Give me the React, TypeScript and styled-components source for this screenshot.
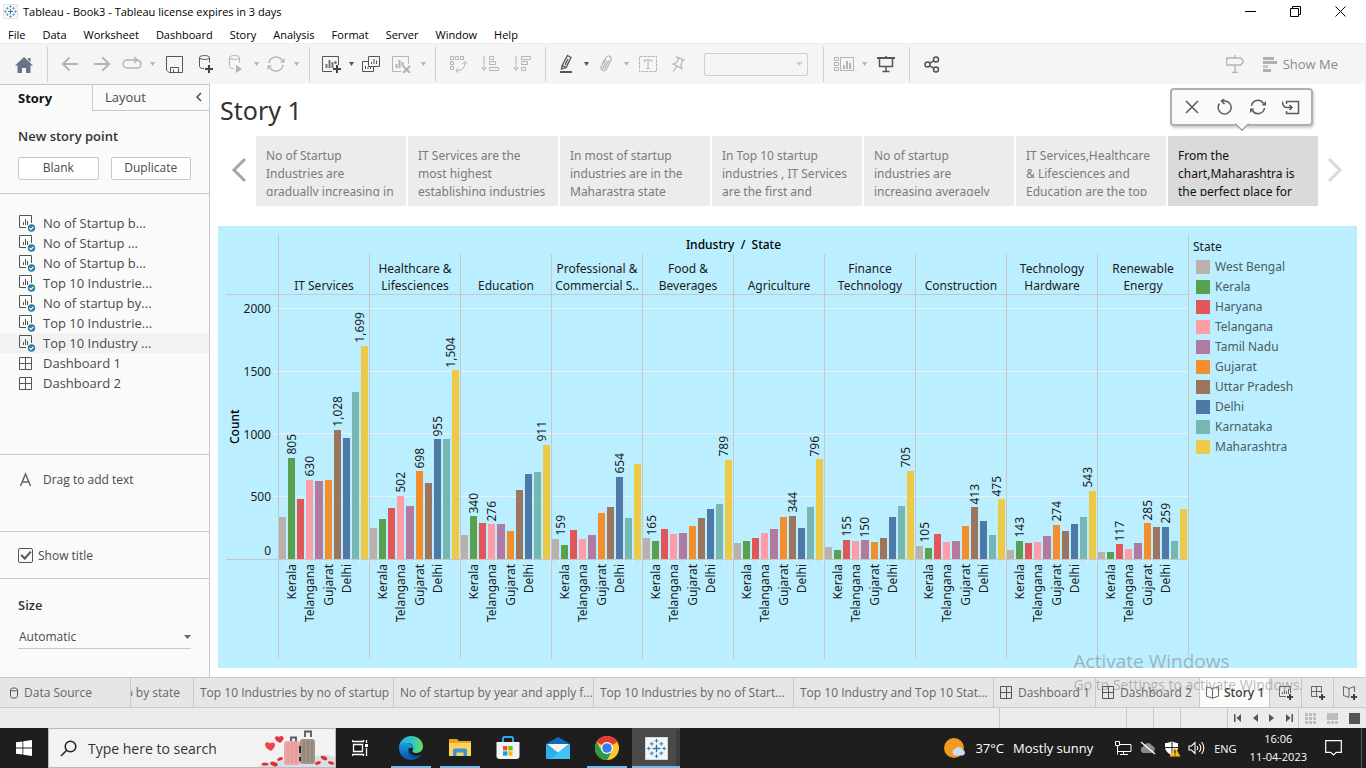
import React from 'react';
import styled, { createGlobalStyle, css } from 'styled-components';

const UI = '"Open Sans", "Noto Sans", sans-serif';
const VIZ = '"Noto Sans", "Open Sans", sans-serif';
const LINE = '#c8c8c8';

const Global = createGlobalStyle`
  * { box-sizing: border-box; }
  body { margin: 0; background: #fff; font-family: ${UI}; font-size: 12px; color: #4a4a4a; }
  button, select, input { font: inherit; color: inherit; margin: 0; }
  button { background: none; border: 0; padding: 0; display: inline-flex; align-items: center; justify-content: center; }
  ul { list-style: none; margin: 0; padding: 0; }
  svg { display: block; flex: none; }
`;

/* ---------- data ---------- */

const states = [
  { name: 'West Bengal', color: '#bab0ac' },
  { name: 'Kerala', color: '#59a14f' },
  { name: 'Haryana', color: '#e15759' },
  { name: 'Telangana', color: '#ff9da7' },
  { name: 'Tamil Nadu', color: '#b07aa1' },
  { name: 'Gujarat', color: '#f28e2b' },
  { name: 'Uttar Pradesh', color: '#9c755f' },
  { name: 'Delhi', color: '#4e79a7' },
  { name: 'Karnataka', color: '#76b7b2' },
  { name: 'Maharashtra', color: '#edc948' },
];

const axisStates = ['Kerala', 'Telangana', 'Gujarat', 'Delhi'];
const SCALE_MAX = 2105;

const industries: { name: string; values: number[]; labelled: number[] }[] = [
  { name: 'IT Services', values: [335, 805, 479, 630, 622, 630, 1028, 965, 1332, 1699], labelled: [1, 3, 6, 9] },
  { name: 'Healthcare & Lifesciences', values: [247, 319, 407, 502, 423, 698, 606, 955, 955, 1504], labelled: [3, 5, 7, 9] },
  { name: 'Education', values: [191, 340, 287, 276, 279, 223, 550, 678, 694, 911], labelled: [1, 3, 9] },
  { name: 'Professional & Commercial S..', values: [159, 112, 231, 159, 191, 367, 415, 654, 327, 758], labelled: [0, 7] },
  { name: 'Food & Beverages', values: [165, 143, 239, 199, 207, 263, 327, 399, 439, 789], labelled: [0, 9] },
  { name: 'Agriculture', values: [128, 143, 167, 207, 239, 335, 344, 247, 415, 796], labelled: [6, 9] },
  { name: 'Finance Technology', values: [96, 72, 155, 145, 150, 136, 167, 335, 423, 705], labelled: [2, 4, 9] },
  { name: 'Construction', values: [105, 88, 199, 136, 143, 263, 413, 303, 191, 475], labelled: [0, 6, 9] },
  { name: 'Technology Hardware', values: [72, 143, 128, 136, 183, 274, 223, 279, 335, 543], labelled: [1, 5, 9] },
  { name: 'Renewable Energy', values: [56, 56, 117, 80, 128, 285, 255, 259, 143, 399], labelled: [2, 5, 7] },
];

const storyPoints = [
  'No of Startup Industries are gradually increasing in',
  'IT Services are the most highest establishing industries',
  'In most of startup industries are in the Maharastra state',
  'In Top 10 startup industries , IT Services are the first and',
  'No of startup industries are increasing averagely',
  'IT Services,Healthcare & Lifesciences and Education are the top',
  'From the chart,Maharashtra is the perfect place for',
];

/* ---------- window chrome ---------- */

const Page = styled.div`
  position: relative;
  min-height: 100vh;
  display: flex;
  flex-direction: column;
  overflow: hidden;
`;

const TitleBar = styled.header`
  height: 23px;
  display: flex;
  align-items: center;
  gap: 5px;
  padding: 0 20px 0 3px;
  font-size: 11px;
  color: #000;
`;

const WindowButtons = styled.div`
  margin-left: auto;
  display: flex;
  gap: 34px;
`;

const MenuBar = styled.nav`
  height: 20px;
  display: flex;
  align-items: center;
  gap: 17px;
  padding: 2px 8px 0;
  font-size: 11px;
  color: #000;
`;

const Toolbar = styled.div`
  height: 41px;
  display: flex;
  align-items: center;
  background: #f5f5f5;
  border-top: 1px solid #ececec;
  color: #b4b4b4;
`;

const ToolGroup = styled.div<{ $pad?: string; $last?: boolean }>`
  height: 35px;
  display: flex;
  align-items: center;
  padding: ${p => p.$pad ?? '0 7px 0 6px'};
  border-right: ${p => (p.$last ? '0' : '1px solid #cfcfcf')};
`;

const Tool = styled.button<{ $w?: number; $on?: boolean }>`
  width: ${p => p.$w ?? 32}px;
  height: 32px;
  color: ${p => (p.$on ? '#555' : '#b4b4b4')};
`;

const FitBox = styled.label`
  display: grid;
  align-items: center;
  width: 104px;
  height: 23px;
  margin-left: 12px;
  margin-right: 8px;
  color: #cfcfcf;
  > * { grid-area: 1 / 1; }
  svg { justify-self: end; margin-right: 5px; pointer-events: none; }
`;

const FitSelect = styled.select`
  appearance: none;
  width: 100%;
  height: 23px;
  border: 1px solid #cfcfcf;
  border-radius: 2px;
  background: #f5f5f5;
`;

const ToolbarEnd = styled.div`
  margin-left: auto;
  padding-right: 28px;
  display: flex;
  align-items: center;
  gap: 12px;
`;

const ShowMe = styled.button`
  gap: 6px;
  font-size: 13px;
  color: #8a8a8a;
`;

/* ---------- workspace ---------- */

const Workspace = styled.div`
  flex: 1;
  display: flex;
`;

const Sidebar = styled.aside`
  width: 210px;
  flex: none;
  display: flex;
  flex-direction: column;
  background: #fafafa;
  border-right: 1px solid ${LINE};
  border-top: 1px solid ${LINE};
`;

const SideTabs = styled.div`
  display: flex;
  height: 26px;
`;

const SideTab = styled.button<{ $active?: boolean }>`
  font-size: 13px;
  line-height: 25px;
  padding: 0;
  ${p =>
    p.$active
      ? css`
          width: 92px;
          justify-content: flex-start;
          padding-left: 18px;
          font-weight: 700;
          color: #111;
        `
      : css`
          flex: 1;
          justify-content: flex-start;
          padding-left: 12px;
          border-left: 1px solid ${LINE};
          border-bottom: 1px solid ${LINE};
        `}
`;

const Collapse = styled.button`
  width: 20px;
  padding-bottom: 2px;
  border-bottom: 1px solid ${LINE};
`;

const Section = styled.section<{ $h: number }>`
  height: ${p => p.$h}px;
  border-bottom: 1px solid ${LINE};
  flex: none;
`;

const SideHeading = styled.h2`
  margin: 0;
  font-size: 13px;
  line-height: 18px;
  font-weight: 600;
  color: #333;
`;

const NewPoint = styled(Section)`
  padding: 16px 18px 0;
`;

const PointButtons = styled.div`
  display: flex;
  gap: 12px;
  margin-top: 12px;
`;

const PointButton = styled.button`
  flex: 1;
  height: 23px;
  padding-bottom: 2px;
  background: #fff;
  border: 1px solid ${LINE};
  border-radius: 2px;
`;

const SheetList = styled.ul`
  padding-top: 19px;
`;

const SheetItem = styled.li<{ $active?: boolean }>`
  height: 20px;
  display: flex;
  align-items: center;
  gap: 7px;
  padding-left: 18px;
  font-size: 13px;
  background: ${p => (p.$active ? '#f2f2f2' : 'transparent')};
`;

const DragText = styled(Section)`
  display: flex;
  align-items: flex-start;
  gap: 11px;
  padding: 16px 19px;
  line-height: 18px;
`;

const TitleToggle = styled(Section)`
  display: flex;
  align-items: center;
`;

const CheckLabel = styled.label`
  display: flex;
  align-items: center;
  gap: 5px;
  padding-left: 18px;
`;

const CheckBox = styled.input`
  appearance: none;
  width: 15px;
  height: 15px;
  border: 1px solid #555;
  border-radius: 2px;
  display: grid;
  place-items: center;
  &:checked::after {
    content: '';
    width: 4px;
    height: 8px;
    margin-bottom: 2px;
    border: solid #555;
    border-width: 0 2px 2px 0;
    transform: rotate(42deg);
  }
`;

const SizeBlock = styled.div`
  padding: 17px 18px 0;
`;

const SizeField = styled.label`
  display: grid;
  align-items: center;
  margin-top: 11px;
  border-bottom: 1px solid ${LINE};
  > * { grid-area: 1 / 1; }
  svg { justify-self: end; pointer-events: none; color: #666; }
`;

const SizeSelect = styled.select`
  appearance: none;
  border: 0;
  background: transparent;
  width: 100%;
  height: 23px;
  padding: 0 1px;
`;

/* ---------- story ---------- */

const StoryView = styled.main`
  position: relative;
  flex: 1;
  min-width: 0;
  display: flex;
  flex-direction: column;
  padding: 0 8px 9px;
  border-right: 1px solid #ededed;
  font-family: ${VIZ};
`;

const StoryTitle = styled.h1`
  margin: 0;
  padding-left: 2px;
  font-size: 25px;
  font-weight: 400;
  line-height: 52px;
  color: #333;
`;

const Navigator = styled.div`
  display: flex;
  align-items: stretch;
  padding: 0 5px 0 4px;
`;

const NavArrow = styled.button<{ $off?: boolean }>`
  width: 34px;
  flex: none;
  padding-bottom: 2px;
  color: ${p => (p.$off ? '#d9d9d9' : '#a6a6a6')};
`;

const Points = styled.div`
  flex: 1;
  display: flex;
  gap: 2px;
`;

const Point = styled.button<{ $active?: boolean }>`
  flex: 1 1 0;
  min-width: 0;
  height: 70px;
  padding: 11px 10px 10px;
  display: block;
  text-align: left;
  font-size: 12px;
  line-height: 18px;
  background: ${p => (p.$active ? '#dadada' : '#ececec')};
  color: ${p => (p.$active ? '#111' : '#7b7b7b')};
  span { display: block; height: 49px; overflow: hidden; }
`;

const PointTools = styled.div`
  position: absolute;
  top: 4px;
  right: 52px;
  width: 143px;
  height: 38px;
  display: flex;
  align-items: center;
  justify-content: center;
  border: 2px solid #b0b0b0;
  border-radius: 4px;
  background: #fafafa;
  box-shadow: 1px 2px 3px rgba(0, 0, 0, 0.2);
  color: #5c5c5c;
  &::after {
    content: '';
    position: absolute;
    top: 29px;
    left: 65px;
    width: 9px;
    height: 9px;
    background: #fafafa;
    border: solid #8a8a8a;
    border-width: 0 1px 1px 0;
    transform: rotate(45deg);
  }
`;

const PointTool = styled.button`
  width: 33px;
  height: 30px;
`;

/* ---------- chart ---------- */

const GRID = '#c9c6c6';

const VizPanel = styled.div`
  flex: 1;
  display: flex;
  margin-top: 20px;
  padding: 8px 0 9px 8px;
  background: #bbefff;
  color: #1b1b1b;
`;

const Chart = styled.div`
  flex: 1;
  min-width: 0;
  display: flex;
  flex-direction: column;
`;

const ChartRow = styled.div<{ $h?: number; $rule?: boolean }>`
  display: flex;
  ${p => (p.$h ? css`height: ${p.$h}px; flex: none;` : css`flex: 1;`)}
  border-bottom: ${p => (p.$rule ? `1px solid ${GRID}` : '0')};
`;

const AxisCell = styled.div`
  width: 52px;
  flex: none;
  display: flex;
`;

const FieldTitle = styled.div`
  flex: 1;
  padding-top: 1px;
  text-align: center;
  font-size: 12px;
  font-weight: 500;
  line-height: 20px;
  color: #000;
  border: solid ${GRID};
  border-width: 0 1px;
`;

const Panes = styled.div`
  flex: 1;
  display: grid;
  grid-template-columns: repeat(10, minmax(0, 1fr));
  border-right: 1px solid ${GRID};
`;

const HeaderCell = styled.div`
  display: flex;
  align-items: flex-end;
  justify-content: center;
  text-align: center;
  border-left: 1px solid ${GRID};
  font-size: 12px;
  line-height: 17px;
`;

const PlotArea = styled.div`
  flex: 1;
  display: grid;
  > * { grid-area: 1 / 1; }
`;

const Scale = styled.div`
  flex: 1;
  display: flex;
  flex-direction: column;
`;

const ScaleGap = styled.div`
  flex: ${SCALE_MAX - 2000} 0 0;
`;

const ScaleStep = styled.div<{ $line?: boolean }>`
  flex: 500 0 0;
  display: flex;
  flex-direction: column;
  justify-content: space-between;
  border-top: ${p => (p.$line ? '1px solid #e9f1f4' : '0')};
`;

const TickRow = styled.div`
  display: flex;
  justify-content: flex-end;
  gap: 2px;
`;

const TickLabel = styled.span<{ $zero?: boolean }>`
  margin-top: ${p => (p.$zero ? 0 : -7)}px;
  padding-right: ${p => (p.$zero ? 7 : 0)}px;
  text-align: right;
  font-size: 12px;
  line-height: 16px;
`;

const Tick = styled.span`
  width: 5px;
  height: 1px;
  background: #e9f1f4;
`;

const AxisTitle = styled.div`
  width: 17px;
  writing-mode: vertical-rl;
  transform: rotate(180deg);
  text-align: center;
  line-height: 17px;
  font-size: 12px;
  font-weight: 500;
  color: #000;
`;

const Pane = styled.div`
  border-left: 1px solid ${GRID};
  display: grid;
`;

const Slots = styled.div`
  margin-left: -1px;
  display: grid;
  grid-template-columns: repeat(10, minmax(0, 1fr));
`;

const Slot = styled.div`
  padding: 0 1px;
  display: flex;
  flex-direction: column;
  justify-content: flex-end;
  align-items: center;
`;

const Bar = styled.div`
  width: 100%;
  flex: none;
`;

const Upright = styled.span`
  writing-mode: vertical-rl;
  transform: rotate(180deg);
  width: 17px;
  line-height: 17px;
  font-size: 12px;
  flex: none;
  white-space: nowrap;
`;

const ValueLabel = styled(Upright)<{ $edge: 'start' | 'end' | 'none' }>`
  margin-bottom: 3px;
  margin-left: ${p => (p.$edge === 'start' ? 9 : 0)}px;
  margin-right: ${p => (p.$edge === 'end' ? 9 : 0)}px;
`;

const AxisSlot = styled.div`
  display: flex;
  flex-direction: column;
  align-items: center;
  gap: 1px;
`;

const SlotTick = styled.i`
  align-self: flex-end;
  width: 1px;
  height: 3px;
  background: #e9f1f4;
`;

const Legend = styled.div`
  width: 168px;
  padding: 3px 0 0 4px;
  font-size: 12px;
  line-height: 20px;
`;

const LegendItem = styled.li`
  display: flex;
  align-items: center;
  gap: 5px;
  padding-left: 3px;
  color: #4d5b60;
`;

const Swatch = styled.span<{ $c: string }>`
  width: 14px;
  height: 14px;
  background: ${p => p.$c};
`;

/* ---------- bottom bars ---------- */

const TabStrip = styled.nav`
  height: 31px;
  display: flex;
  background: #e6e6e6;
  border: solid ${LINE};
  border-width: 1px 0;
  color: #666;
`;

const SheetTab = styled.button<{ $w: number; $active?: boolean; $clip?: boolean; $grow?: boolean }>`
  flex: ${p => (p.$grow ? '1 1' : '0 0')} ${p => p.$w}px;
  min-width: 0;
  gap: 5px;
  padding: 0 5px 0 6px;
  justify-content: ${p => (p.$clip ? 'flex-end' : 'flex-start')};
  overflow: hidden;
  white-space: nowrap;
  border-right: 1px solid ${LINE};
  ${p => p.$clip && css`padding: 0 13px 0 0;`}
  ${p => p.$active && css`background: #fbfbfb; font-weight: 600; color: #444;`}
`;

const NewTab = styled.button`
  width: 32px;
  flex: none;
  border-right: 1px solid ${LINE};
  &:last-child { border-right: 0; }
`;

const StatusBar = styled.div`
  height: 20px;
  display: flex;
  justify-content: flex-end;
  background: #ebebeb;
  color: #555;
`;

const StatusCell = styled.div<{ $w: number }>`
  width: ${p => p.$w}px;
  display: flex;
  align-items: center;
  justify-content: space-around;
  border-left: 1px solid ${LINE};
`;

const Taskbar = styled.footer`
  height: 40px;
  display: flex;
  background: #1e1e1e;
  color: #fff;
`;

const TaskButton = styled.button<{ $w: number; $open?: boolean; $active?: boolean }>`
  width: ${p => p.$w}px;
  flex: none;
  border-bottom: 2px solid ${p => (p.$open ? '#76b9ed' : 'transparent')};
  border-top: 2px solid transparent;
  ${p =>
    p.$active &&
    css`
      background: #4a4a4a;
      border-top-color: #4a4a4a;
      box-shadow: inset -4px 0 #3c3c3c;
    `}
`;

const SearchBox = styled.label`
  width: 288px;
  display: flex;
  align-items: center;
  gap: 11px;
  padding-left: 11px;
  background: #f2f2f2;
  border: 1px solid #b9b9b9;
  color: #222;
`;

const SearchInput = styled.input`
  flex: 1;
  min-width: 0;
  border: 0;
  padding: 0;
  background: transparent;
  font-size: 14px;
  &::placeholder { color: #333; opacity: 1; }
`;

const TaskGap = styled.div<{ $w: number }>`
  width: ${p => p.$w}px;
`;

const Tray = styled.div`
  margin-left: auto;
  display: flex;
  align-items: center;
`;

const Weather = styled.button`
  gap: 9px;
  font-size: 13px;
  color: #fff;
  margin-right: 22px;
`;

const TrayIcons = styled.div`
  display: flex;
  align-items: center;
  gap: 7px;
  margin-right: 9px;
`;

const Language = styled.span`
  font-size: 11px;
  margin-right: 13px;
`;

const Clock = styled.div`
  font-size: 11px;
  line-height: 18px;
  text-align: center;
  margin-right: 18px;
`;

const Notice = styled.button`
  margin-right: 19px;
`;

const ShowDesktop = styled.button`
  width: 5px;
  height: 40px;
  border-left: 1px solid #5a5a5a;
`;

const Watermark = styled.div`
  position: absolute;
  right: 63px;
  bottom: 73px;
  color: rgba(120, 120, 120, 0.5);
  pointer-events: none;
  p { margin: 0; font-size: 14px; line-height: 20px; }
  p:first-child { font-size: 19px; line-height: 27px; }
`;

/* ---------- icons ---------- */

type IconProps = { w?: number; h?: number; sw?: number; children: React.ReactNode };
const Icon = ({ w = 18, h = 18, sw = 1, children }: IconProps) => (
  <svg width={w} height={h} viewBox={`0 0 ${w} ${h}`} fill="none" stroke="currentColor" strokeWidth={sw} aria-hidden="true">
    {children}
  </svg>
);

const Caret = ({ s = 5 }: { s?: number }) => (
  <svg width={s} height="4" viewBox="0 0 5 4" preserveAspectRatio="none" aria-hidden="true">
    <path d="M0 0h5L2.5 4z" fill="currentColor" />
  </svg>
);

const TableauMark = ({ size = 16 }: { size?: number }) => (
  <svg width={size} height={size} viewBox="0 0 24 24" aria-hidden="true">
    <rect x=".5" y=".5" width="23" height="23" fill="#f4f6f8" stroke="#d5d9dc" />
    <g stroke="#2f78a6" strokeWidth="1.5">
      <path d="M12 8v8M8 12h8" />
      <path d="M7 5v4M5 7h4M17 5v4M15 7h4M7 15v4M5 17h4M17 15v4M15 17h4" stroke="#5d9cc2" />
      <path d="M12 2v4M10 4h4M12 18v4M10 20h4M4 10v4M2 12h4M20 10v4M18 12h4" strokeWidth="1" />
    </g>
  </svg>
);

const DbShape = () => <path d="M2.5 3.5v9c0 1.4 2.3 2 4.5 2M2.5 3.5c0-2.6 10-2.6 10 0s-10 2.6-10 0zM12.5 3.5v5" />;

const WorksheetIcon = () => (
  <Icon>
    <g stroke="#555">
      <path d="M8 13.5H1.5V1.5H13.5V9" />
      <path d="M5.5 11V8M7.5 11V5M9.5 11V7" />
    </g>
    <circle cx="13.500" cy="14" r="3.700" fill="#2e7d9e" stroke="none" />
    <path d="M11.500 14l1.500 1.500 2.500-2.700" stroke="#fff" strokeWidth="1.200" />
  </Icon>
);

const DashIcon = ({ w = 13 }: { w?: number }) => (
  <Icon w={w} h={13}>
    <path d={w > 13 ? 'M1.5 .5h12v12h-12zM7.5 .5v12M1.5 6.5h12' : 'M.5 .5h11v12H.5zM6.5 .5v12M.5 6.5h11'} stroke="#555" />
  </Icon>
);

const BookIcon = () => (
  <Icon w={13} h={13}>
    <path d="M6.5 2.500L.5 .8v9.400l6 2 6-2V.8zM6.5 2.500v10" stroke="#666" />
  </Icon>
);

const Plus = ({ x, y, r = 4 }: { x: number; y: number; r?: number }) => (
  <path d={`M${x} ${y - r}v${2 * r}M${x - r} ${y}h${2 * r}`} stroke="#444" strokeWidth="2" />
);

const Chevron = ({ flip }: { flip?: boolean }) => (
  <Icon w={16} h={26} sw={3}>
    <path d={flip ? 'M2 2l11 11L2 24' : 'M14 2L3 13l11 11'} />
  </Icon>
);

/* ---------- sections ---------- */

const Tools = () => (
  <Toolbar>
    <ToolGroup $pad="0">
      <Tool $w={47} aria-label="Start page">
        <svg width="18" height="17" viewBox="0 0 18 17"><path d="M9 1l9 8.500h-2.500V17h-4.500v-5H7v5H2.500V9.500H0zM13 2h2.500v4L13 4z" fill="#66758a" /></svg>
      </Tool>
    </ToolGroup>
    <ToolGroup>
      <Tool aria-label="Undo"><Icon sw={2}><path d="M17 9H2M8.500 2.500L2 9l6.500 6.500" /></Icon></Tool>
      <Tool aria-label="Redo"><Icon sw={2}><path d="M1 9h15M9.500 2.500L16 9l-6.500 6.500" /></Icon></Tool>
      <Tool $w={28} aria-label="Replay"><Icon w={20} h={18} sw={1.5}><path d="M9 5H5a3.800 3.800 0 000 8h10a3.800 3.800 0 001-7.500M12 2l3.500 3L12 8M9 5h6" /></Icon></Tool>
      <Tool $w={12} aria-label="Replay options"><Caret /></Tool>
      <Tool $on aria-label="Save"><Icon w={17} h={17}><path d="M.5 .5h16v16H3L.5 14zM4.500 16v-4.500h8V16M7.500 16v-2.500" /></Icon></Tool>
      <Tool $on aria-label="New data source"><Icon w={18} h={20}><DbShape /><Plus x={12} y={15} /></Icon></Tool>
      <Tool $w={28} aria-label="Run updates"><Icon w={18} h={20}><DbShape /><path d="M9 11l6 4-6 4z" fill="currentColor" stroke="none" /></Icon></Tool>
      <Tool $w={12} aria-label="Update options"><Caret /></Tool>
      <Tool $w={28} aria-label="Refresh"><Icon sw={1.5}><path d="M2 8a7 7 0 0113-2.500M16 10a7 7 0 01-13 2.500" /><path d="M17.500 3v4.500H13zM.5 15v-4.500H5z" fill="currentColor" stroke="none" /></Icon></Tool>
      <Tool $w={12} aria-label="Refresh options"><Caret /></Tool>
    </ToolGroup>
    <ToolGroup $pad="0 6px 0 7px">
      <Tool $w={28} $on aria-label="New worksheet"><Icon w={20} h={18}><path d="M11 16.500H1.500V1.500H17.500V10" /><path d="M5.500 13V9M8.500 13V5M11.500 13V7M14.500 9V6" strokeWidth="2" stroke="#777" /><Plus x={16} y={14} /></Icon></Tool>
      <Tool $w={12} $on aria-label="New options"><Caret /></Tool>
      <Tool $w={28} $on aria-label="Duplicate"><Icon><path d="M6.500 1.500h11v10h-11zM9.500 9V7M12 9V4M14.500 9V5.500M6 6.500H.5v10h11V12M3.500 14v-3M6 14v-2M8.500 14v-2" /></Icon></Tool>
      <Tool aria-label="Clear sheet"><Icon w={20} h={18}><path d="M10 16.500H1.500V1.500H17.500V9" /><path d="M5.500 13V9M8.500 13V5M11.500 11V7" strokeWidth="2" /><path d="M12 11l7 7M19 11l-7 7" strokeWidth="2" /></Icon></Tool>
      <Tool $w={12} aria-label="Clear options"><Caret /></Tool>
    </ToolGroup>
    <ToolGroup>
      <Tool aria-label="Swap"><Icon><path d="M1.500 1.500h3v3h-3zM6.500 1.500h3v3h-3zM11.500 1.500h3v3h-3zM1.500 6.500h3v3h-3zM1.500 11.500h3v3h-3z" /><path d="M16 7v1.500a7 7 0 01-7 7H7M13.500 9L16 6.500 18 9M9.500 13L7 15.500 9.500 18" /></Icon></Tool>
      <Tool aria-label="Sort ascending"><Icon><path d="M3 1v14M.5 12L3 15.500 5.500 12M8.500 1.500h4v3h-4zM8.500 6.500h6v3h-6zM8.500 12.500h9v3h-9z" /></Icon></Tool>
      <Tool aria-label="Sort descending"><Icon><path d="M3 1v14M.5 12L3 15.500 5.500 12M8.500 1.500h9v3h-9zM8.500 6.500h6v3h-6zM8.500 12.500h4v3h-4z" /></Icon></Tool>
    </ToolGroup>
    <ToolGroup>
      <Tool $w={28} $on aria-label="Highlight"><Icon w={14} h={20}><path d="M8.500 1.500l3.500 2L7 13.500l-3.800-2zM9 5l-3 6M3.200 11.500L2.500 15 7 13.500" strokeWidth="1.300" /><path d="M1 18h12" strokeWidth="2" /></Icon></Tool>
      <Tool $w={12} $on aria-label="Highlight options"><Caret /></Tool>
      <Tool $w={28} aria-label="Group"><Icon w={14} h={18} sw={1.2}><path d="M3 9l4-6.500c2-3 6.500-.8 5 2.500L7.500 14c-2 3.300-7 1-5.200-2.500L6.500 4.500M10 5.500l-4.200 7.500c-.8 1-2 .3-1.500-.8L8 5.500" /></Icon></Tool>
      <Tool $w={12} aria-label="Group options"><Caret /></Tool>
      <Tool aria-label="Show mark labels"><Icon><path d="M.5 1.500h17v15H.5z" strokeDasharray="3 1" /><path d="M5.500 7V5h7v2M9 5v8.500M7 13.500h4" /></Icon></Tool>
      <Tool $w={28} aria-label="Fix axes"><Icon w={14} h={18} sw={1.2}><path d="M6 2l7 3-2 1-1 4.500 1 3L2 9l3.500-1.500L7.500 4zM6 11.500L2 16.500" /></Icon></Tool>
      <FitBox>
        <FitSelect aria-label="Fit"><option></option></FitSelect>
        <Caret s={7} />
      </FitBox>
    </ToolGroup>
    <ToolGroup>
      <Tool $w={28} aria-label="Show cards"><Icon w={20} h={15}><path d="M.5 .5h4v3h-4zM.5 5.500h4v3h-4zM.5 10.500h4v3h-4zM6.500 .5h13v13h-13z" /><path d="M10 12V8M13 12V4M16 12V6" strokeWidth="2" /></Icon></Tool>
      <Tool $w={12} aria-label="Card options"><Caret /></Tool>
      <Tool $on aria-label="Presentation mode"><Icon w={18} h={17}><path d="M0 2h18" strokeWidth="2" /><path d="M2.500 2v8.500h13V2M9 0v2M9 10.500v5M5.500 15.500h7" strokeWidth="1.500" /></Icon></Tool>
    </ToolGroup>
    <ToolGroup $last>
      <Tool $on aria-label="Share"><Icon w={16} h={17} sw={1.5}><circle cx="3.500" cy="8.500" r="2.500" /><circle cx="12" cy="3.500" r="2.500" /><circle cx="12" cy="13.500" r="2.500" /><path d="M5.700 7.200l4-2.400M5.700 9.800l4 2.400" /></Icon></Tool>
    </ToolGroup>
    <ToolbarEnd>
      <Tool aria-label="Guide"><Icon sw={1.3}><path d="M.7 3h14l3 3.500-3 3.500H.7zM9 0v3M9 10v7.500M6 17.300h6" /></Icon></Tool>
      <ShowMe>
        <svg width="14" height="15" viewBox="0 0 14 15" aria-hidden="true"><path d="M0 0h11v3H0zM0 4h14v3H0zM0 12h8v3H0z" fill="#b0b0b0" /><path d="M0 8h5v3H0z" fill="#c9c9c9" /></svg>
        Show Me
      </ShowMe>
    </ToolbarEnd>
  </Toolbar>
);

const sheetItems = ['No of Startup b...', 'No of Startup ...', 'No of Startup b...', 'Top 10 Industrie...', 'No of startup by...', 'Top 10 Industrie...', 'Top 10 Industry ...'];

const SidePanel = () => (
  <Sidebar>
    <SideTabs>
      <SideTab $active>Story</SideTab>
      <SideTab>Layout</SideTab>
      <Collapse aria-label="Collapse pane"><Icon w={6} h={10} sw={1.5}><path d="M5 1L1 5l4 4" /></Icon></Collapse>
    </SideTabs>
    <NewPoint $h={83}>
      <SideHeading>New story point</SideHeading>
      <PointButtons>
        <PointButton>Blank</PointButton>
        <PointButton>Duplicate</PointButton>
      </PointButtons>
    </NewPoint>
    <Section $h={261}>
      <SheetList>
        {sheetItems.map((s, i) => (
          <SheetItem key={i} $active={i === 6}><WorksheetIcon />{s}</SheetItem>
        ))}
        <SheetItem><DashIcon w={18} />Dashboard 1</SheetItem>
        <SheetItem><DashIcon w={18} />Dashboard 2</SheetItem>
      </SheetList>
    </Section>
    <DragText $h={77}>
      <Icon w={13} h={18} sw={1.5}><path d="M1.500 15L6.500 3l5 12M3.300 11h6.400" stroke="#666" /></Icon>
      Drag to add text
    </DragText>
    <TitleToggle $h={47}>
      <CheckLabel><CheckBox type="checkbox" defaultChecked />Show title</CheckLabel>
    </TitleToggle>
    <SizeBlock>
      <SideHeading>Size</SideHeading>
      <SizeField>
        <SizeSelect aria-label="Size"><option>Automatic</option></SizeSelect>
        <Caret s={7} />
      </SizeField>
    </SizeBlock>
  </Sidebar>
);

const Plot = () => (
  <VizPanel>
    <Chart>
      <ChartRow $h={20}><AxisCell /><FieldTitle>Industry&nbsp; /&nbsp; State</FieldTitle></ChartRow>
      <ChartRow $h={41} $rule>
        <AxisCell />
        <Panes>{industries.map(d => <HeaderCell key={d.name}>{d.name}</HeaderCell>)}</Panes>
      </ChartRow>
      <ChartRow $rule>
        <AxisCell>
          <AxisTitle>Count</AxisTitle>
          <Scale>
            <ScaleGap />
            {[2000, 1500, 1000, 500].map(t => (
              <ScaleStep key={t}>
                <TickRow><TickLabel>{t}</TickLabel><Tick /></TickRow>
                {t === 500 && <TickLabel $zero>0</TickLabel>}
              </ScaleStep>
            ))}
          </Scale>
        </AxisCell>
        <PlotArea>
          <Scale>
            <ScaleGap />
            {[2000, 1500, 1000, 500].map(t => <ScaleStep key={t} $line />)}
          </Scale>
          <Panes>
            {industries.map(d => (
              <Pane key={d.name}>
                <Slots>
                  {d.values.map((v, i) => (
                    <Slot key={i}>
                      {d.labelled.includes(i) && (
                        <ValueLabel $edge={i === 0 ? 'start' : i === 9 ? 'end' : 'none'}>{v.toLocaleString('en-US')}</ValueLabel>
                      )}
                      <Bar style={{ height: `${(v / SCALE_MAX) * 100}%`, background: states[i].color }} />
                    </Slot>
                  ))}
                </Slots>
              </Pane>
            ))}
          </Panes>
        </PlotArea>
      </ChartRow>
      <ChartRow $h={99}>
        <AxisCell />
        <Panes>
          {industries.map(d => (
            <Pane key={d.name}>
              <Slots>
                {states.map(s => (
                  <AxisSlot key={s.name}>
                    <SlotTick />
                    {axisStates.includes(s.name) && <Upright>{s.name}</Upright>}
                  </AxisSlot>
                ))}
              </Slots>
            </Pane>
          ))}
        </Panes>
      </ChartRow>
    </Chart>
    <Legend>
      State
      <ul>
        {states.map(s => <LegendItem key={s.name}><Swatch $c={s.color} />{s.name}</LegendItem>)}
      </ul>
    </Legend>
  </VizPanel>
);

const Story = () => (
  <StoryView>
    <StoryTitle>Story 1</StoryTitle>
    <Navigator>
      <NavArrow aria-label="Previous"><Chevron /></NavArrow>
      <Points>
        {storyPoints.map((t, i) => <Point key={t} $active={i === 6}><span>{t}</span></Point>)}
      </Points>
      <NavArrow $off aria-label="Next"><Chevron flip /></NavArrow>
    </Navigator>
    <PointTools>
      <PointTool aria-label="Delete"><Icon w={14} h={14} sw={1.5}><path d="M1 1l12 12M13 1L1 13" /></Icon></PointTool>
      <PointTool aria-label="Revert"><Icon w={16} h={16} sw={1.5}><path d="M2.500 4.500A6.500 6.500 0 108 2H5" /><path d="M7.500 -.5L4.500 2l3 3" /></Icon></PointTool>
      <PointTool aria-label="Update"><Icon w={18} h={16} sw={1.5}><path d="M2.500 7a6.500 6.500 0 0112-2.500M15.500 9a6.500 6.500 0 01-12 2.500" /><path d="M17 2v4.500h-4.500zM1 14V9.500h4.500z" fill="currentColor" stroke="none" /></Icon></PointTool>
      <PointTool aria-label="Save as new"><Icon w={18} h={15} sw={1.5}><path d="M4.500 4V1.500h12v12h-12V11M.5 1.500c0 3.500 1.500 6 5 6H10M7.500 5L10 7.500 7.500 10" /></Icon></PointTool>
    </PointTools>
    <Plot />
  </StoryView>
);

const Bottom = () => (
  <>
    <TabStrip>
      <SheetTab $w={131}><Icon w={13} h={12}><path d="M4.500 2.500c0-2 7-2 7 0v7c0 2-7 2-7 0zM4.500 2.500c0 1.800 7 1.800 7 0" stroke="#555" /></Icon>Data Source</SheetTab>
      <SheetTab $w={63} $clip>p by state</SheetTab>
      <SheetTab $w={200} $grow>Top 10 Industries by no of startup</SheetTab>
      <SheetTab $w={200} $grow>No of startup by year and apply f...</SheetTab>
      <SheetTab $w={200} $grow>Top 10 Industries by no of Start...</SheetTab>
      <SheetTab $w={200} $grow>Top 10 Industry and Top 10 Stat...</SheetTab>
      <SheetTab $w={102}><DashIcon />Dashboard 1</SheetTab>
      <SheetTab $w={104}><DashIcon />Dashboard 2</SheetTab>
      <SheetTab $w={70} $active><BookIcon />Story 1</SheetTab>
      <NewTab aria-label="New worksheet"><Icon w={16} h={16}><path d="M8 11.500H1.500V1.500H12.500V8M4.500 9V7M6.500 9V5M8.500 9V6M10.500 9V4" stroke="#666" /><Plus x={12} y={12} r={3} /></Icon></NewTab>
      <NewTab aria-label="New dashboard"><Icon w={16} h={16}><path d="M8 11.500H1.500V1.500H11.500V8M6.500 1.500v10M1.500 6.500h10" stroke="#666" /><Plus x={12} y={12} r={3} /></Icon></NewTab>
      <NewTab aria-label="New story"><Icon w={16} h={16}><path d="M7 3.500L1.500 1.500v9L7 12.500M7 3.500l5.500-2V7M7 3.500v9" stroke="#666" /><Plus x={12} y={12} r={3} /></Icon></NewTab>
    </TabStrip>
    <StatusBar>
      <StatusCell $w={127} /><StatusCell $w={27} /><StatusCell $w={27} /><StatusCell $w={47} />
      <StatusCell $w={71}>
        <svg width="8" height="8" viewBox="0 0 8 8"><path d="M0 0h1.500v8H0zM7 0v8L2.500 4z" fill="#555" /></svg>
        <svg width="5" height="8" viewBox="0 0 5 8"><path d="M5 0v8L0 4z" fill="#555" /></svg>
        <svg width="5" height="8" viewBox="0 0 5 8"><path d="M0 0v8l5-4z" fill="#555" /></svg>
        <svg width="8" height="8" viewBox="0 0 8 8"><path d="M6.500 0H8v8H6.500zM1 0v8l4.500-4z" fill="#555" /></svg>
      </StatusCell>
      <StatusCell $w={68}>
        <svg width="11" height="11" viewBox="0 0 11 11"><path d="M0 0h3v3H0zM4 0h3v3H4zM8 0h3v3H8zM0 4h3v3H0zM4 4h3v3H4zM8 4h3v3H8zM0 8h3v3H0zM4 8h3v3H4zM8 8h3v3H8z" fill="#bdbdbd" /></svg>
        <svg width="11" height="11" viewBox="0 0 11 11"><path d="M0 0h11v7H0zM0 8h3v3H0zM4 8h3v3H4zM8 8h3v3H8z" fill="#bdbdbd" /></svg>
        <svg width="11" height="11" viewBox="0 0 11 11"><path d="M0 0h11v11H0z" fill="#555" /></svg>
      </StatusCell>
    </StatusBar>
  </>
);

const Luggage = () => (
  <svg width="78" height="38" viewBox="0 0 78 38" aria-hidden="true">
    <path d="M0 38C16 29 36 33 50 29s22-3 28-1v10z" fill="#dcdbe8" />
    <path d="M34 14V8.500h5V14M48 8V2.500h6V8" fill="none" stroke="#55586a" strokeWidth="1.800" />
    <rect x="27" y="12" width="16" height="24" rx="2.500" fill="#eda6a6" />
    <path d="M31 14v20M35 14v20M39 14v20" stroke="#de9094" />
    <rect x="43" y="10" width="15" height="25" rx="2.500" fill="#a09488" />
    <path d="M47 12v21M51 12v21M55 12v21" stroke="#877a70" />
    <path d="M43 17v7M43 28v4" stroke="#2c2c35" strokeWidth="2" />
    <path d="M14 22c-4-2-6-4-6-6.500 0-2.500 3.500-3 5-.7 1.500-2 5-1.500 5 1 0 2.500-1.500 4-4 6.200z" fill="#f0414e" />
    <path d="M23 14c-3-1.500-5-3-5-5 0-2 3-2.500 4-.8 1.500-2 4.500-1 4.500 1 0 2-1.500 3-3.500 4.800z" fill="#e3344a" />
    <g fill="#d8342c">
      <ellipse cx="8" cy="35" rx="3.500" ry="1.600" />
      <ellipse cx="17" cy="35" rx="4" ry="2" transform="rotate(20 17 35)" />
      <ellipse cx="23" cy="30" rx="3" ry="1.600" transform="rotate(-20 23 30)" />
      <ellipse cx="67" cy="29" rx="3.500" ry="1.800" transform="rotate(25 67 29)" />
      <ellipse cx="61" cy="34" rx="3" ry="1.600" transform="rotate(-20 61 34)" />
      <ellipse cx="74" cy="34" rx="3" ry="1.500" transform="rotate(15 74 34)" />
    </g>
  </svg>
);

const WindowsTaskbar = () => (
  <Taskbar>
    <TaskButton $w={48} aria-label="Start">
      <svg width="16" height="16" viewBox="0 0 16 16"><path d="M0 2.300L6.500 1.400v6.200H0zM7.300 1.300L16 0v7.600H7.300zM0 8.400h6.500v6.200L0 13.700zM7.300 8.400H16V16l-8.700-1.300z" fill="#fff" /></svg>
    </TaskButton>
    <SearchBox>
      <Icon w={17} h={17} sw={1.5}><circle cx="10.500" cy="6.500" r="5.300" /><path d="M6.700 10.300L1 16" /></Icon>
      <SearchInput placeholder="Type here to search" aria-label="Search" />
      <Luggage />
    </SearchBox>
    <TaskButton $w={48} aria-label="Task view">
      <Icon w={17} h={16}><path d="M1.500 4.500h9v7h-9zM.5 0v1.500h11V0M.5 16v-1.500h11V16M14.500 0v3M14.500 8v8" stroke="#fff" strokeWidth="1.300" /><path d="M13 4h3v3h-3z" fill="#fff" stroke="none" /></Icon>
    </TaskButton>
    <TaskGap $w={7} />
    <TaskButton $w={40} $open aria-label="Edge">
      <svg width="24" height="24" viewBox="0 0 24 24">
        <defs>
          <linearGradient id="edgeTop" x1="0" x2="1"><stop offset="0" stopColor="#2aa8e6" /><stop offset=".55" stopColor="#2fc6c0" /><stop offset="1" stopColor="#67dd5c" /></linearGradient>
          <linearGradient id="edgeLow" x1="0" x2="0" y1="0" y2="1"><stop offset="0" stopColor="#1b9de2" /><stop offset="1" stopColor="#0b52a8" /></linearGradient>
        </defs>
        <path d="M0 12C0 5 5.500 0 12 0s12 4.500 12 10.500c0 4-3 6.500-7 6.500-3 0-4-1.200-3.500-2.200C15 13 15 7 8.500 7 4 7 0 9 0 12z" fill="url(#edgeTop)" />
        <path d="M0 12c0-3.500 4-5.500 8.500-5 4 .3 6 3 5.800 5.500C9.500 9.500 7 15 11 18.500c3.500 3 8.500 2 10.800.3C20 22 16 24 12 24 5 24 0 18.500 0 12z" fill="url(#edgeLow)" />
        <path d="M9.500 12.500c-2.500 5 1.500 9.500 6 9.500 3 0 5-1.500 6.300-3.200-3.500 2-11.300 1.500-12.300-6.300z" fill="#0a4c92" />
      </svg>
    </TaskButton>
    <TaskGap $w={9} />
    <TaskButton $w={40} $open aria-label="File Explorer">
      <svg width="22" height="20" viewBox="0 0 22 20"><path d="M0 1h8l2 2h12v15H0z" fill="#e8a317" /><path d="M0 5h22v13H0z" fill="#ffd45c" /><path d="M4 18v-6q0-1.500 1.500-1.500h11q1.500 0 1.500 1.500v6h-3.500v-3.500h-7V18z" fill="#3c93d8" /></svg>
    </TaskButton>
    <TaskGap $w={8} />
    <TaskButton $w={40} aria-label="Store">
      <svg width="24" height="24" viewBox="0 0 24 24"><path d="M7 7V2.500q0-1.500 1.500-1.500h7Q17 1 17 2.500V7" fill="none" stroke="#29a9e8" strokeWidth="2" /><path d="M.5 6h23v14q0 3-3 3h-17q-3 0-3-3z" fill="#f3f3f3" /><path d="M7 10h4.300v4.300H7z" fill="#f25022" /><path d="M12.300 10h4.300v4.300h-4.300z" fill="#7fba00" /><path d="M7 15.300h4.300v4.300H7z" fill="#00a4ef" /><path d="M12.300 15.300h4.300v4.300h-4.300z" fill="#ffb900" /></svg>
    </TaskButton>
    <TaskGap $w={10} />
    <TaskButton $w={40} aria-label="Mail">
      <svg width="24" height="22" viewBox="0 0 24 22"><path d="M0 7l12-7 12 7v15H0z" fill="#0f6cbd" /><path d="M1 7h22l-11 9z" fill="#f4f4f4" /><path d="M0 7l12 8.500L24 7v15H0z" fill="#2db0ee" /><path d="M24 7L4 22h20z" fill="#41c3f5" /></svg>
    </TaskButton>
    <TaskGap $w={9} />
    <TaskButton $w={40} $open aria-label="Chrome">
      <svg width="24" height="24" viewBox="0 0 24 24"><circle cx="12" cy="12" r="12" fill="#fcc934" /><path d="M12 12L1.600 6A12 12 0 0122.400 6z" fill="#e33b2e" /><path d="M1.600 6A12 12 0 0012 24l5.200-9L12 12 6.800 15z" fill="#2c9a48" /><circle cx="12" cy="12" r="6" fill="#fff" /><circle cx="12" cy="12" r="4.800" fill="#3a7df0" /></svg>
    </TaskButton>
    <TaskGap $w={5} />
    <TaskButton $w={48} $open $active aria-label="Tableau"><TableauMark size={23} /></TaskButton>
    <Tray>
      <Weather>
        <svg width="22" height="21" viewBox="0 0 22 21" aria-hidden="true"><circle cx="10" cy="10" r="10" fill="#f39a1f" /><path d="M11 17.500a3.500 3.500 0 01.3-6.800 4 4 0 017 1 3 3 0 01.7 5.800z" fill="#c9defa" /></svg>
        <span>37°C</span>
        <span>Mostly sunny</span>
      </Weather>
      <TrayIcons>
        <Icon w={17} h={14}><path d="M4 3.500h12v7H3M8.500 10.500v3M5 13.500h8M.5 .5h4v4h-4zM2.500 4.500v9" stroke="#fff" /></Icon>
        <svg width="18" height="14" viewBox="0 0 18 14"><path d="M4 12a3.500 3.500 0 010-6.500 5 5 0 019-1 4 4 0 01.5 7.500z" fill="#8a8a8a" /><path d="M2 1l14 12" stroke="#fff" strokeWidth="1.300" /></svg>
        <svg width="17" height="17" viewBox="0 0 17 17"><path d="M8 1c2 1.500 4 2 6 2v4c0 4-3 7-6 8.500C5 14 1 11 1 7V3c2 0 5-.5 7-2z" fill="#fff" /><path d="M8 1v14M1 7.500h13" stroke="#1e1e1e" /><path d="M11 7l5.500 9.500h-11z" fill="#fbbc1d" /><path d="M11 10v3.500M11 14.500v1" stroke="#222" strokeWidth="1.200" /></svg>
        <Icon w={17} h={14}><path d="M1 5h2.500L7 1.500v11L3.500 9H1zM9 5q1.500 2 0 4M11.300 3q3 4 0 8M13.600 1q4.500 6 0 12" stroke="#fff" strokeWidth="1.100" /></Icon>
      </TrayIcons>
      <Language>ENG</Language>
      <Clock>16:06<br />11-04-2023</Clock>
      <Notice aria-label="Notifications"><Icon w={17} h={16}><path d="M.7 .7h15.600v11.600h-5L8.500 15l-2.800-2.700h-5z" stroke="#fff" strokeWidth="1.200" /></Icon></Notice>
      <ShowDesktop aria-label="Show desktop" />
    </Tray>
  </Taskbar>
);

const menus = ['File', 'Data', 'Worksheet', 'Dashboard', 'Story', 'Analysis', 'Format', 'Server', 'Window', 'Help'];

export default function App() {
  return (
    <Page>
      <Global />
      <TitleBar>
        <TableauMark size={15} />
        Tableau - Book3 - Tableau license expires in 3 days
        <WindowButtons>
          <button aria-label="Minimize"><Icon w={11} h={11}><path d="M0 5.500h11" stroke="#000" /></Icon></button>
          <button aria-label="Restore"><Icon w={11} h={11}><path d="M.5 2.500h8v8h-8zM2.500 2.500v-2h8v8h-2" stroke="#000" /></Icon></button>
          <button aria-label="Close"><Icon w={11} h={11}><path d="M.5 .5l10 10M10.500 .5l-10 10" stroke="#000" /></Icon></button>
        </WindowButtons>
      </TitleBar>
      <MenuBar>{menus.map(m => <button key={m}>{m}</button>)}</MenuBar>
      <Tools />
      <Workspace>
        <SidePanel />
        <Story />
      </Workspace>
      <Bottom />
      <WindowsTaskbar />
      <Watermark>
        <p>Activate Windows</p>
        <p>Go to Settings to activate Windows.</p>
      </Watermark>
    </Page>
  );
}
